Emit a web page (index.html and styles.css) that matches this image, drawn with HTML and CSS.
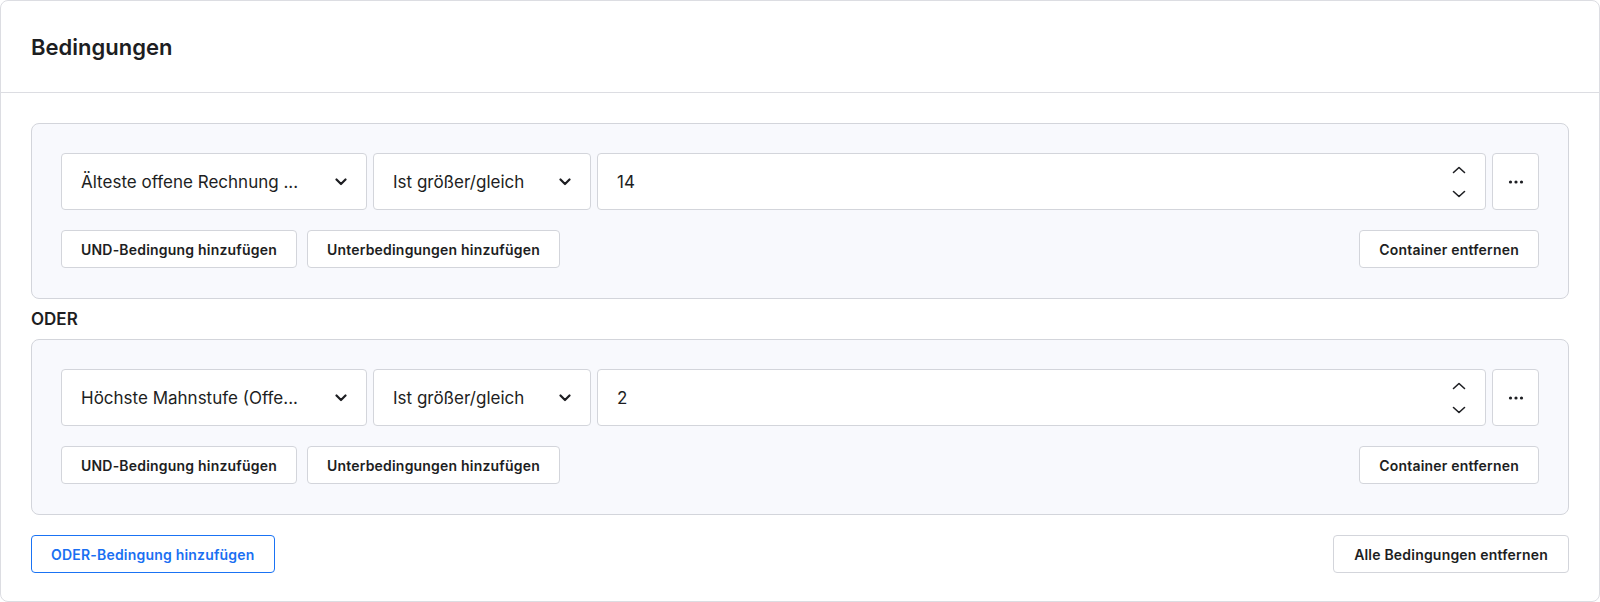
FILE: index.html
```html
<!DOCTYPE html>
<html lang="de">
<head>
    <meta charset="UTF-8">
    <meta name="viewport" content="width=device-width, initial-scale=1.0">
    <title>Bedingungen</title>
    <link rel="stylesheet" href="styles.css">
</head>
<body>

    <div class="card">
        <div class="card-header">
            <h2>Bedingungen</h2>
        </div>

        <div class="card-body">

            <div class="group">
                <div class="row">
                    <div class="field select-field">
                        <span>Älteste offene Rechnung ...</span>
                        <svg class="chevron" width="12" height="8" viewBox="0 0 12 8"><path d="M1.5 1.5 6 6l4.5-4.5" fill="none" stroke="#1d1e22" stroke-width="2.2" stroke-linecap="round" stroke-linejoin="round"/></svg>
                    </div>
                    <div class="field op-field">
                        <span>Ist größer/gleich</span>
                        <svg class="chevron" width="12" height="8" viewBox="0 0 12 8"><path d="M1.5 1.5 6 6l4.5-4.5" fill="none" stroke="#1d1e22" stroke-width="2.2" stroke-linecap="round" stroke-linejoin="round"/></svg>
                    </div>
                    <div class="field number-field">
                        <span>14</span>
                        <div class="spinner">
                            <svg width="14" height="8" viewBox="0 0 14 8"><path d="M1.5 6.5 7 1.5l5.5 5" fill="none" stroke="#1d1e22" stroke-width="1.6" stroke-linecap="round" stroke-linejoin="round"/></svg>
                            <svg width="14" height="8" viewBox="0 0 14 8"><path d="M1.5 1.5 7 6.5l5.5-5" fill="none" stroke="#1d1e22" stroke-width="1.6" stroke-linecap="round" stroke-linejoin="round"/></svg>
                        </div>
                    </div>
                    <button class="more">
                        <svg width="16" height="4" viewBox="0 0 16 4"><circle cx="2.5" cy="2" r="1.6" fill="#1d1e22"/><circle cx="8" cy="2" r="1.6" fill="#1d1e22"/><circle cx="13.5" cy="2" r="1.6" fill="#1d1e22"/></svg>
                    </button>
                </div>
                <div class="actions">
                    <button class="btn btn-und">UND-Bedingung hinzufügen</button>
                    <button class="btn btn-sub">Unterbedingungen hinzufügen</button>
                    <button class="btn btn-remove">Container entfernen</button>
                </div>
            </div>

            <div class="or-label">ODER</div>

            <div class="group">
                <div class="row">
                    <div class="field select-field">
                        <span>Höchste Mahnstufe (Offe...</span>
                        <svg class="chevron" width="12" height="8" viewBox="0 0 12 8"><path d="M1.5 1.5 6 6l4.5-4.5" fill="none" stroke="#1d1e22" stroke-width="2.2" stroke-linecap="round" stroke-linejoin="round"/></svg>
                    </div>
                    <div class="field op-field">
                        <span>Ist größer/gleich</span>
                        <svg class="chevron" width="12" height="8" viewBox="0 0 12 8"><path d="M1.5 1.5 6 6l4.5-4.5" fill="none" stroke="#1d1e22" stroke-width="2.2" stroke-linecap="round" stroke-linejoin="round"/></svg>
                    </div>
                    <div class="field number-field">
                        <span>2</span>
                        <div class="spinner">
                            <svg width="14" height="8" viewBox="0 0 14 8"><path d="M1.5 6.5 7 1.5l5.5 5" fill="none" stroke="#1d1e22" stroke-width="1.6" stroke-linecap="round" stroke-linejoin="round"/></svg>
                            <svg width="14" height="8" viewBox="0 0 14 8"><path d="M1.5 1.5 7 6.5l5.5-5" fill="none" stroke="#1d1e22" stroke-width="1.6" stroke-linecap="round" stroke-linejoin="round"/></svg>
                        </div>
                    </div>
                    <button class="more">
                        <svg width="16" height="4" viewBox="0 0 16 4"><circle cx="2.5" cy="2" r="1.6" fill="#1d1e22"/><circle cx="8" cy="2" r="1.6" fill="#1d1e22"/><circle cx="13.5" cy="2" r="1.6" fill="#1d1e22"/></svg>
                    </button>
                </div>
                <div class="actions">
                    <button class="btn btn-und">UND-Bedingung hinzufügen</button>
                    <button class="btn btn-sub">Unterbedingungen hinzufügen</button>
                    <button class="btn btn-remove">Container entfernen</button>
                </div>
            </div>

            <div class="footer">
                <button class="btn btn-primary">ODER-Bedingung hinzufügen</button>
                <button class="btn btn-clear">Alle Bedingungen entfernen</button>
            </div>

        </div>
    </div>

</body>
</html>
```

FILE: styles.css
```css
/* General */
* {
    box-sizing: border-box;
}

body {
    margin: 0;
    font-family: Inter, "Noto Sans", Arial, sans-serif;
    color: #1d1e22;
    background: #fff;
}

.card {
    width: 1600px;
    height: 602px;
    border: 1px solid #dcdde2;
    border-radius: 8px;
    background: #fff;
}

.card-header {
    height: 92px;
    display: flex;
    align-items: center;
    padding: 0 30px;
    border-bottom: 1px solid #dcdde2;
}

.card-header h2 {
    margin: 0;
    font-size: 22px;
    font-weight: 600;
}

.card-body {
    padding: 30px 30px 0 30px;
}

/* Condition group */
.group {
    background: #f8f9fd;
    border: 1px solid #d3d5db;
    border-radius: 8px;
    padding: 29px 29px 30px 29px;
}

.row {
    display: flex;
    gap: 6px;
    height: 57px;
}

.field {
    display: flex;
    align-items: center;
    justify-content: space-between;
    background: #fff;
    border: 1px solid #d3d5db;
    border-radius: 4px;
    padding: 0 20px 0 19px;
    font-size: 17px;
}

.select-field {
    width: 306px;
    padding-right: 19px;
}

.op-field {
    width: 218px;
    padding-right: 19px;
}

.number-field {
    flex: 1;
    padding-right: 19px;
}

.spinner {
    display: flex;
    flex-direction: column;
    gap: 16px;
    padding-top: 1px;
}

.spinner svg {
    display: block;
}

.more {
    width: 47px;
    background: #fff;
    border: 1px solid #d3d5db;
    border-radius: 4px;
    display: flex;
    align-items: center;
    justify-content: center;
    padding: 0;
}

.actions {
    display: flex;
    gap: 10px;
    margin-top: 20px;
}

.btn {
    height: 38px;
    padding: 0 19px;
    background: #fff;
    border: 1px solid #d3d5db;
    border-radius: 4px;
    font-family: inherit;
    font-size: 14px;
    font-weight: 600;
    letter-spacing: 0.2px;
    color: #1d1e22;
    cursor: pointer;
}

.btn-remove {
    margin-left: auto;
}

.or-label {
    font-size: 17px;
    font-weight: 600;
    line-height: 22px;
    margin: 9px 0 9px;
}

.footer {
    display: flex;
    justify-content: space-between;
    margin-top: 20px;
}

.btn-primary {
    border: 1.5px solid #1a73f4;
    color: #1a6ff2;
    padding: 0 19px;
}

.btn-clear {
    padding: 0 20px;
}
```
